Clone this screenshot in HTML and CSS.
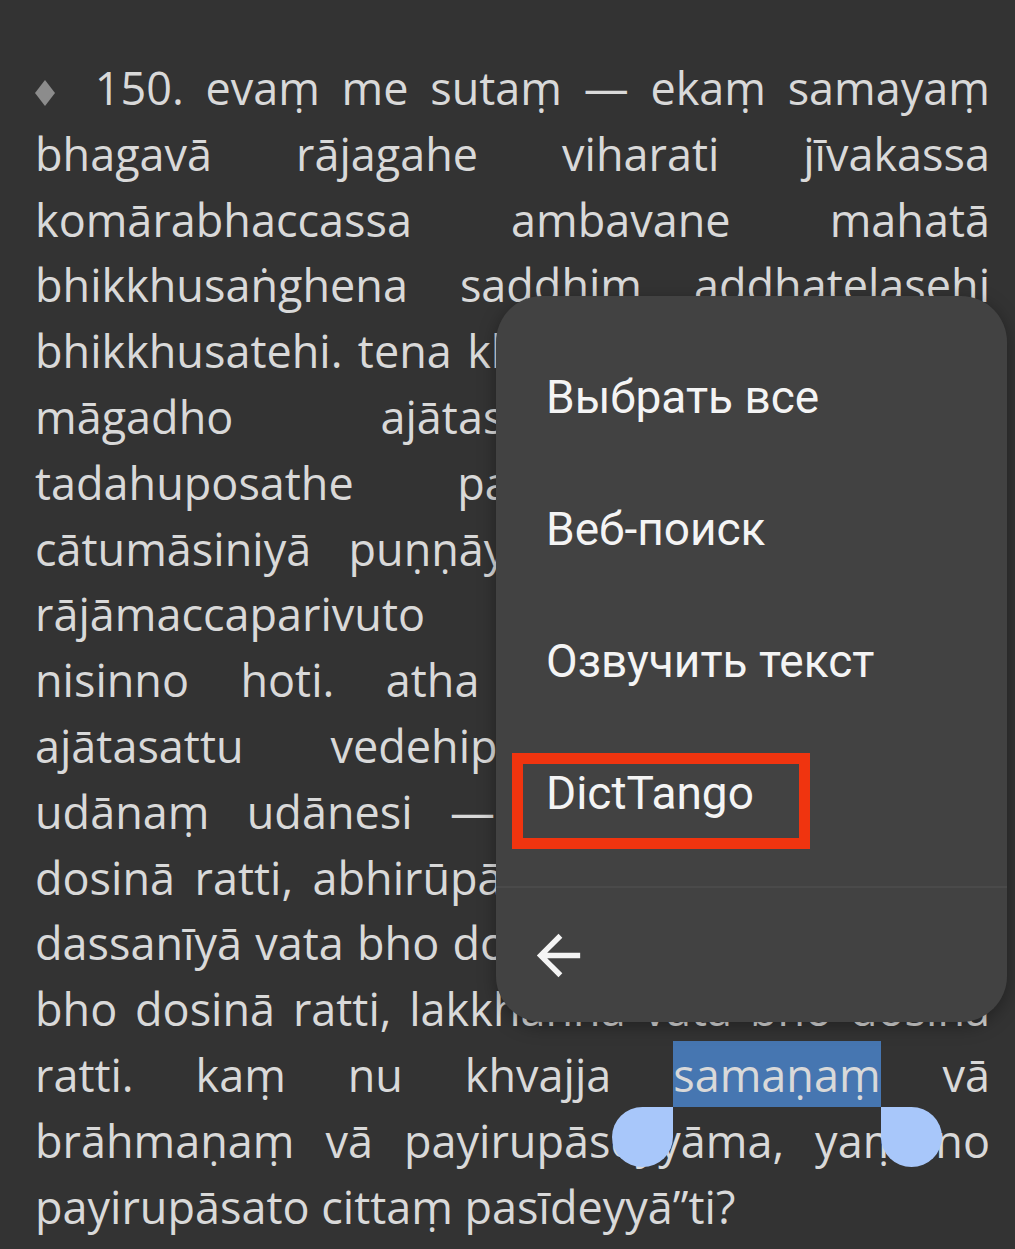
FILE: index.html
```html
<!DOCTYPE html>
<html lang="pi">
<head>
<meta charset="utf-8">
<title>Reader</title>
<link rel="stylesheet" href="styles.css">
</head>
<body>
<main class="page">
  <div class="text">
    <div class="ln"><svg class="dia" viewBox="0 0 38 26" width="38" height="26"><polygon points="10,0 20,13 10,26 0,13"/></svg> 150. evaṃ me sutaṃ — ekaṃ samayaṃ</div>
    <div class="ln">bhagavā rājagahe viharati jīvakassa</div>
    <div class="ln">komārabhaccassa ambavane mahatā</div>
    <div class="ln">bhikkhusaṅghena saddhiṃ aḍḍhateḷasehi</div>
    <div class="ln">bhikkhusatehi. tena kho pana samayena rājā</div>
    <div class="ln">māgadho ajātasattu vedehiputto</div>
    <div class="ln">tadahuposathe pannarase komudiyā</div>
    <div class="ln">cātumāsiniyā puṇṇāya puṇṇamāya rattiyā</div>
    <div class="ln">rājāmaccaparivuto uparipāsādavaragato</div>
    <div class="ln">nisinno hoti. atha kho rājā māgadho</div>
    <div class="ln">ajātasattu vedehiputto tadahuposathe</div>
    <div class="ln">udānaṃ udānesi — “ramaṇīyā vata bho</div>
    <div class="ln">dosinā ratti, abhirūpā vata bho dosinā ratti,</div>
    <div class="ln">dassanīyā vata bho dosinā <span class="tight">ratti, pāsādikā vata</span></div>
    <div class="ln">bho dosinā ratti, lakkhaññā vata bho dosinā</div>
    <div class="ln">ratti. kaṃ nu khvajja <span class="sel">samaṇaṃ<span class="handle h-left"></span><span class="handle h-right"></span></span> vā</div>
    <div class="ln">brāhmaṇaṃ vā payirupāseyyāma, yaṃ no</div>
    <div class="ln last">payirupāsato cittaṃ pasīdeyyā”ti?</div>
  </div>

  <div class="menu">
    <ul class="items">
      <li class="item">Выбрать все</li>
      <li class="item">Веб-поиск</li>
      <li class="item">Озвучить текст</li>
      <li class="item">DictTango<span class="mark"></span></li>
    </ul>
    <div class="back">
      <svg class="arrow" viewBox="0 0 24 24" width="65" height="65"><path d="M20 11H7.83l5.59-5.59L12 4l-8 8 8 8 1.41-1.41L7.83 13H20v-2z"/></svg>
    </div>
  </div>
</main>
</body>
</html>
```
FILE: styles.css
```css
html, body {
  margin: 0;
  padding: 0;
  background: #333333;
}

.page {
  position: relative;
  width: 1015px;
  height: 1249px;
  overflow: hidden;
}

.text {
  padding: 55px 25px 0 35px;
  font-family: "Open Sans", "Noto Sans", "DejaVu Sans", sans-serif;
  font-size: 45px;
  line-height: 65.8px;
  color: #d9d9d9;
}

.ln {
  text-align: justify;
  text-align-last: justify;
  height: 65.8px;
}

.ln.last {
  text-align-last: left;
}

.tight {
  letter-spacing: -0.8px;
}

.dia {
  display: inline-block;
  vertical-align: -1px;
  fill: #8c8c8c;
}

.sel {
  position: relative;
  background: #4676b1;
  padding: 3px 0 2px;
}

.handle {
  position: absolute;
  top: 100%;
  width: 61px;
  height: 60px;
  background: #a8c7fa;
}

.h-left {
  right: 100%;
  border-radius: 50% 0 50% 50%;
}

.h-right {
  left: 100%;
  border-radius: 0 50% 50% 50%;
}

.menu {
  position: absolute;
  left: 496px;
  top: 296px;
  width: 511px;
  height: 726px;
  background: #424242;
  border-radius: 46px;
  box-shadow: 0 4px 18px rgba(0, 0, 0, 0.35);
  font-family: Roboto, "Noto Sans", sans-serif;
  color: #f4f4f4;
  display: flex;
  flex-direction: column;
}

.items {
  list-style: none;
  margin: 0;
  padding: 35px 0 0;
  border-bottom: 2px solid #4a4a4a;
  height: 592px;
  box-sizing: border-box;
}

.item {
  position: relative;
  height: 132px;
  display: flex;
  align-items: center;
  padding-left: 50px;
  font-size: 46px;
}

.mark {
  position: absolute;
  left: 16px;
  top: 26px;
  width: 298px;
  height: 96px;
  box-sizing: border-box;
  border: 11px solid #f0340f;
}

.back {
  flex: 1;
  display: flex;
  align-items: center;
  padding-left: 30px;
}

.arrow {
  fill: #f4f4f4;
}
```
